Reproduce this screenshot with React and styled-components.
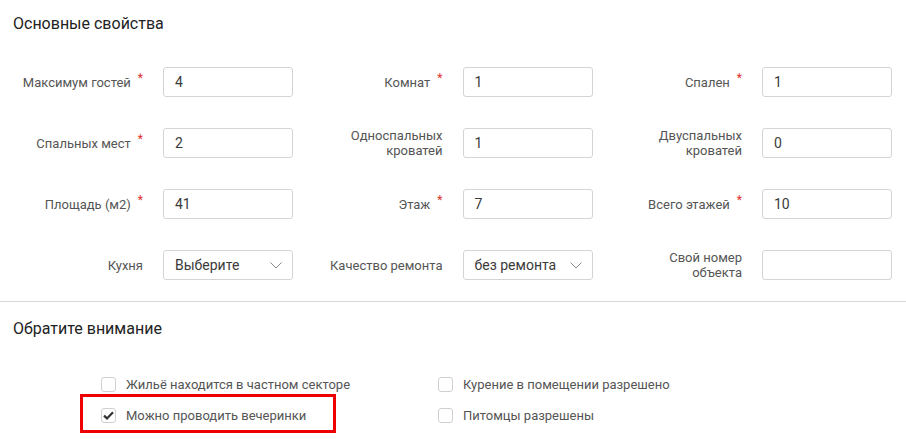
import React from "react";
import styled, { createGlobalStyle } from "styled-components";

const GlobalStyle = createGlobalStyle`
  body {
    margin: 0;
    background: #fff;
    font-family: Roboto, "Liberation Sans", sans-serif;
  }
`;

const fields = [
  { label: "Максимум гостей", value: "4", required: true },
  { label: "Комнат", value: "1", required: true },
  { label: "Спален", value: "1", required: true },
  { label: "Спальных мест", value: "2", required: true },
  { label: ["Односпальных", "кроватей"], value: "1" },
  { label: ["Двуспальных", "кроватей"], value: "0" },
  { label: "Площадь (м2)", value: "41", required: true },
  { label: "Этаж", value: "7", required: true },
  { label: "Всего этажей", value: "10", required: true },
  { label: "Кухня", value: "Выберите", select: true },
  { label: "Качество ремонта", value: "без ремонта", select: true },
  { label: ["Свой номер", "объекта"], value: "" },
];

const options = [
  { text: "Жильё находится в частном секторе" },
  { text: "Курение в помещении разрешено" },
  { text: "Можно проводить вечеринки", checked: true, marked: true },
  { text: "Питомцы разрешены" },
];

const App = () => (
  <Page>
    <GlobalStyle />
    <SectionTitle>Основные свойства</SectionTitle>
    <FieldGrid>
      {fields.map((f, i) => (
        <Field key={i}>
          <Label>
            <LabelText>
              {Array.isArray(f.label)
                ? f.label.map((l) => <span key={l}>{l}</span>)
                : f.label}
            </LabelText>
            {f.required && <Star>*</Star>}
          </Label>
          {f.select ? (
            <Select>
              <span>{f.value}</span>
              <Chevron />
            </Select>
          ) : (
            <Input>{f.value}</Input>
          )}
        </Field>
      ))}
    </FieldGrid>
    <Divider />
    <SectionTitle second>Обратите внимание</SectionTitle>
    <CheckGrid>
      {options.map((o) => (
        <CheckItem key={o.text} $marked={o.marked}>
          <Box>{o.checked && <Tick />}</Box>
          {o.text}
        </CheckItem>
      ))}
    </CheckGrid>
  </Page>
);

const Chevron = () => (
  <svg width="12" height="7" viewBox="0 0 12 7">
    <path d="M0.5 0.5 L6 6 L11.5 0.5" fill="none" stroke="#888" strokeWidth="1" />
  </svg>
);

const Tick = () => (
  <svg width="11" height="9" viewBox="0 0 11 9">
    <path d="M1 4.6 L4 7.4 L10 1.2" fill="none" stroke="#333" strokeWidth="2.2" />
  </svg>
);

const Page = styled.div`
  width: 906px;
  min-height: 442px;
  box-sizing: border-box;
  padding-top: 14px;
`;

const SectionTitle = styled.div`
  padding-left: 13px;
  font-size: 16px;
  line-height: 20px;
  color: #222;
  margin-top: ${(p) => (p.second ? "17px" : "0")};
`;

const FieldGrid = styled.div`
  display: grid;
  grid-template-columns: repeat(3, 299.5px);
  grid-auto-rows: 30px;
  row-gap: 31px;
  margin-top: 33px;
`;

const Field = styled.div`
  display: flex;
  align-items: center;
`;

const Label = styled.div`
  width: 143px;
  margin-right: 20px;
  display: flex;
  justify-content: flex-end;
  align-items: center;
  font-size: 13px;
  color: #555;
`;

const LabelText = styled.div`
  display: flex;
  flex-direction: column;
  align-items: flex-end;
  text-align: right;
  line-height: 15px;
`;

const Star = styled.span`
  color: #e0302a;
  font-size: 12px;
  margin-left: 7px;
  align-self: flex-start;
  line-height: 10px;
  margin-top: -2px;
`;

const Input = styled.div`
  box-sizing: border-box;
  width: 130px;
  height: 30px;
  border: 1px solid #d4d4d4;
  border-radius: 3px;
  padding: 0 11px;
  display: flex;
  align-items: center;
  font-size: 14px;
  color: #3a3a3a;
`;

const Select = styled(Input)`
  justify-content: space-between;
  padding-right: 10px;
`;

const Divider = styled.div`
  height: 1px;
  background: #d6d6d6;
  margin-top: 21px;
`;

const CheckGrid = styled.div`
  display: grid;
  grid-template-columns: 337px 337px;
  grid-auto-rows: 20px;
  row-gap: 11px;
  padding-left: 101px;
  margin-top: 35px;
`;

const CheckItem = styled.label`
  position: relative;
  display: flex;
  align-items: center;
  gap: 10px;
  font-size: 13px;
  color: #555;

  ${(p) =>
    p.$marked &&
    `
    &::after {
      content: '';
      position: absolute;
      left: -21px;
      top: -11px;
      width: 256px;
      height: 39px;
      box-sizing: border-box;
      border: 3px solid #ee0000;
    }
  `}
`;

const Box = styled.span`
  box-sizing: border-box;
  width: 15px;
  height: 15px;
  border: 1px solid #d0d0d0;
  border-radius: 3px;
  display: flex;
  align-items: center;
  justify-content: center;
`;

export default App;
